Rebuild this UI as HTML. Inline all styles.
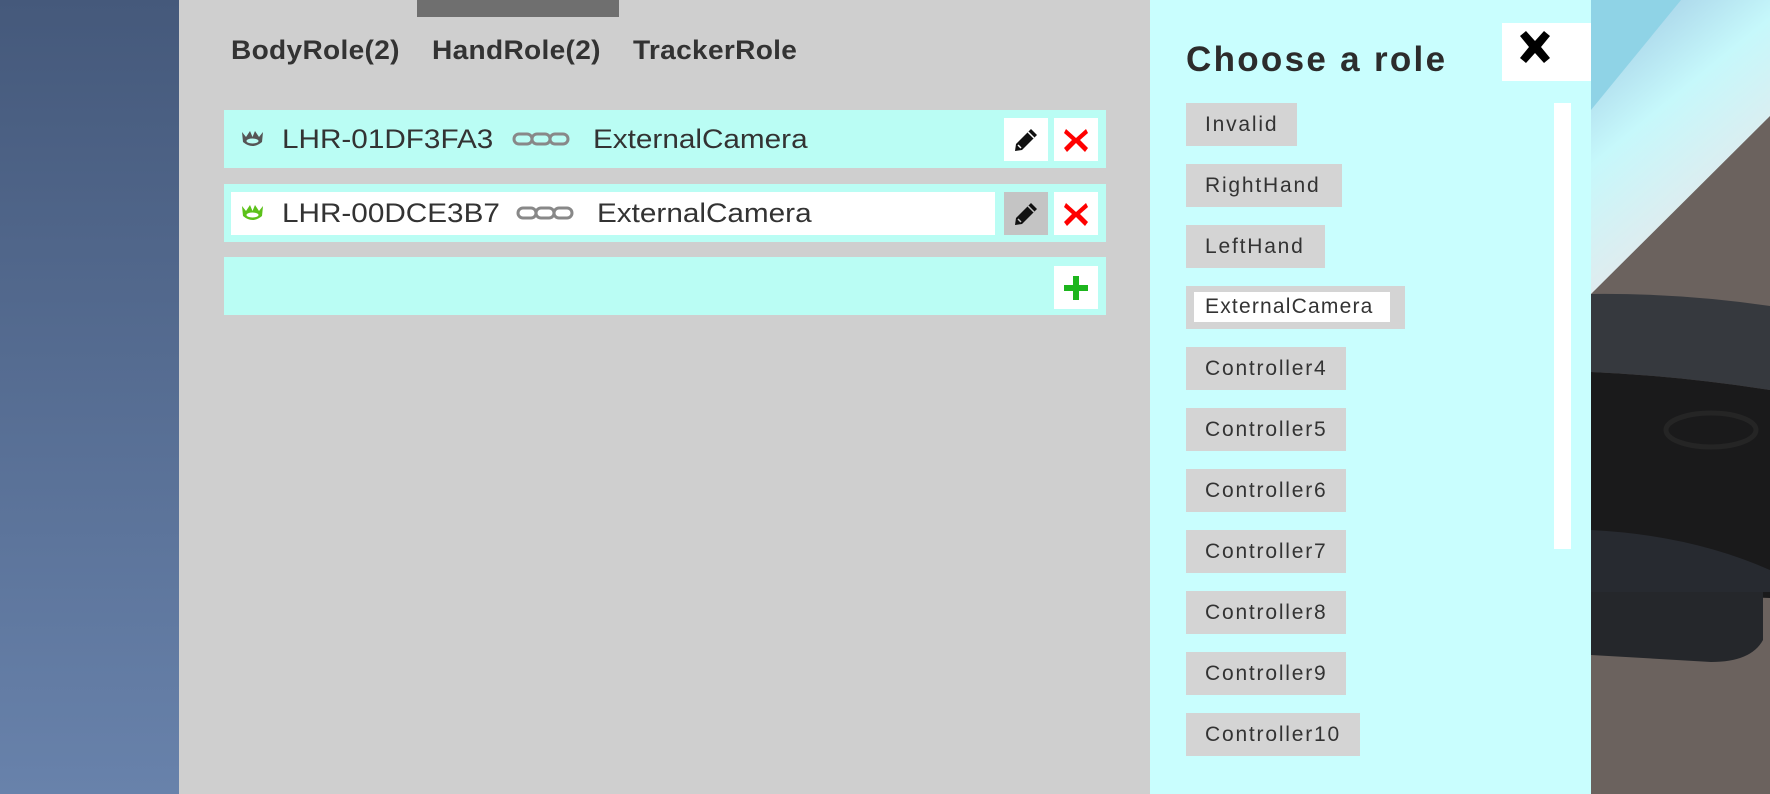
<!DOCTYPE html>
<html><head><meta charset="utf-8"><style>
*{margin:0;padding:0;box-sizing:border-box}
body{width:1770px;height:794px;overflow:hidden;position:relative;font-family:"Liberation Sans",Arial,sans-serif;background:#555}
.a{position:absolute}
.left{left:0;top:0;width:179px;height:794px;background:linear-gradient(#45597b,#6882ab)}
.gray{left:179px;top:0;width:971px;height:794px;background:#cfcfcf}
.cyan{left:1150px;top:0;width:441px;height:794px;background:#c9fefe}
.scene{left:1591px;top:0;width:179px;height:794px;background:#6b625e;overflow:hidden}
.tab{top:35px;font-size:27px;font-weight:bold;color:#333;letter-spacing:0.3px;transform:scaleX(1.04);transform-origin:left}
.row{left:224px;width:882px;height:58px;background:#bafdf4}
.txt{font-size:27px;color:#333;transform:scaleX(1.1);transform-origin:left;white-space:nowrap}
.btn{width:44px;height:43px;background:#fff;display:flex;align-items:center;justify-content:center}
.item{left:1186px;height:43px;background:#d4d4d4;font-size:21px;color:#333;padding-left:19px;line-height:43px;letter-spacing:1.8px}
</style></head><body>
<div class="a left"></div>
<div class="a gray"></div>
<div class="a" style="left:417px;top:0;width:202px;height:17px;background:#6f6f6f"></div>
<div class="a tab" style="left:231px">BodyRole(2)</div>
<div class="a tab" style="left:432px">HandRole(2)</div>
<div class="a tab" style="left:633px">TrackerRole</div>

<div class="a row" style="top:110px"></div>
<div class="a row" style="top:184px"></div>
<div class="a row" style="top:257px"></div>
<div class="a" style="left:231px;top:192px;width:764px;height:43px;background:#fff"></div>

<svg class="a" style="left:240px;top:128px" width="25" height="22" viewBox="0 0 25 22"><path d="M2 4 L6 9 L10 3 L12.5 9 L15 3 L19 9 L23 4 L22 14 Q12.5 22 3 14Z" fill="#555"/><ellipse cx="12.5" cy="13" rx="6" ry="2.5" fill="#bafdf4"/></svg>
<div class="a txt" style="left:282px;top:124px">LHR-01DF3FA3</div>
<svg class="a" style="left:512px;top:132px" width="59" height="14" viewBox="0 0 59 14"><g fill="none" stroke="#888" stroke-width="3"><rect x="2" y="2" width="18" height="10" rx="5"/><rect x="20" y="2" width="18" height="10" rx="5"/><rect x="38" y="2" width="18" height="10" rx="5"/></g></svg>
<div class="a txt" style="left:593px;top:124px">ExternalCamera</div>

<svg class="a" style="left:240px;top:202px" width="25" height="22" viewBox="0 0 25 22"><path d="M2 4 L6 9 L10 3 L12.5 9 L15 3 L19 9 L23 4 L22 14 Q12.5 22 3 14Z" fill="#5cc11a"/><ellipse cx="12.5" cy="13" rx="6" ry="2.5" fill="#fff"/></svg>
<div class="a txt" style="left:282px;top:198px">LHR-00DCE3B7</div>
<svg class="a" style="left:516px;top:206px" width="59" height="14" viewBox="0 0 59 14"><g fill="none" stroke="#888" stroke-width="3"><rect x="2" y="2" width="18" height="10" rx="5"/><rect x="20" y="2" width="18" height="10" rx="5"/><rect x="38" y="2" width="18" height="10" rx="5"/></g></svg>
<div class="a txt" style="left:597px;top:198px">ExternalCamera</div>

<div class="a btn" style="left:1004px;top:118px"><svg width="28" height="28" viewBox="0 0 28 28"><path d="M19 3 L25 9 L10 24 L3 25 L4 18Z" fill="#111"/><path d="M6 19 L9 22" stroke="#fff" stroke-width="1.5"/><path d="M16 6 L22 12" stroke="#fff" stroke-width="1.5"/></svg></div>
<div class="a btn" style="left:1054px;top:118px"><svg width="30" height="30" viewBox="0 0 30 30"><path d="M5 4 L15 13 L25 4 L27 8 L19 15 L27 23 L24 27 L15 18 L6 27 L3 23 L11 15 L3 8Z" fill="#f00"/></svg></div>
<div class="a btn" style="left:1004px;top:192px;background:#c4c4c4"><svg width="28" height="28" viewBox="0 0 28 28"><path d="M19 3 L25 9 L10 24 L3 25 L4 18Z" fill="#111"/><path d="M6 19 L9 22" stroke="#c4c4c4" stroke-width="1.5"/><path d="M16 6 L22 12" stroke="#c4c4c4" stroke-width="1.5"/></svg></div>
<div class="a btn" style="left:1054px;top:192px"><svg width="30" height="30" viewBox="0 0 30 30"><path d="M5 4 L15 13 L25 4 L27 8 L19 15 L27 23 L24 27 L15 18 L6 27 L3 23 L11 15 L3 8Z" fill="#f00"/></svg></div>
<div class="a btn" style="left:1054px;top:266px"><svg width="30" height="30" viewBox="0 0 30 30"><path d="M12 3 H18 V12 H27 V18 H18 V27 H12 V18 H3 V12 H12Z" fill="#1db51d"/></svg></div>

<div class="a cyan"></div>
<div class="a" style="left:1186px;top:40px;font-size:35px;font-weight:bold;color:#2c2c2c;letter-spacing:2.3px">Choose a role</div>
<div class="a" style="left:1502px;top:23px;width:89px;height:58px;background:#fff"></div>
<svg class="a" style="left:1516px;top:30px" width="38" height="36" viewBox="0 0 38 36"><path d="M4 6 L10 1 L19 11 L28 1 L34 6 L25 17 L34 28 L28 33 L19 23 L10 33 L4 28 L13 17Z" fill="#000"/></svg>
<div class="a" style="left:1554px;top:103px;width:17px;height:446px;background:#fff"></div>

<div class="a item" style="top:103px;width:111px">Invalid</div>
<div class="a item" style="top:164px;width:156px">RightHand</div>
<div class="a item" style="top:225px;width:139px">LeftHand</div>
<div class="a item" style="top:286px;width:219px;padding:0"><div style="margin:6px 0 0 8px;width:196px;height:30px;background:#fff;line-height:30px;padding-left:11px;letter-spacing:1.2px">ExternalCamera</div></div>
<div class="a item" style="top:347px;width:160px">Controller4</div>
<div class="a item" style="top:408px;width:160px">Controller5</div>
<div class="a item" style="top:469px;width:160px">Controller6</div>
<div class="a item" style="top:530px;width:160px">Controller7</div>
<div class="a item" style="top:591px;width:160px">Controller8</div>
<div class="a item" style="top:652px;width:160px">Controller9</div>
<div class="a item" style="top:713px;width:174px">Controller10</div>

<div class="a scene">
<svg width="179" height="794" viewBox="0 0 179 794">
<defs><linearGradient id="s" x1="0" y1="0" x2="0.5" y2="1"><stop offset="0" stop-color="#9cc3e0"/><stop offset=".45" stop-color="#c6f8fb"/><stop offset=".8" stop-color="#dfecef"/><stop offset="1" stop-color="#8a8682"/></linearGradient></defs>
<rect width="179" height="794" fill="#6b625e"/>
<path d="M0 0 H179 V116 L0 294Z" fill="url(#s)"/>
<path d="M0 0 H90 L0 110Z" fill="#8fd3e6"/>
<path d="M0 294 Q90 292 179 306 V790 H0Z" fill="#6b625e"/>
<path d="M0 294 Q90 293 179 306 V390 Q90 376 0 372Z" fill="#36393e"/>
<path d="M0 372 Q90 376 179 390 V598 L0 592Z" fill="#1a1a1b"/>
<path d="M0 530 Q100 535 179 570 V592 L0 592Z" fill="#272a30"/>
<path d="M0 592 H172 V640 Q160 662 120 662 L0 655Z" fill="#25272b"/>
<ellipse cx="120" cy="430" rx="45" ry="17" fill="none" stroke="#252525" stroke-width="5"/>
</svg>
</div>
</body></html>
